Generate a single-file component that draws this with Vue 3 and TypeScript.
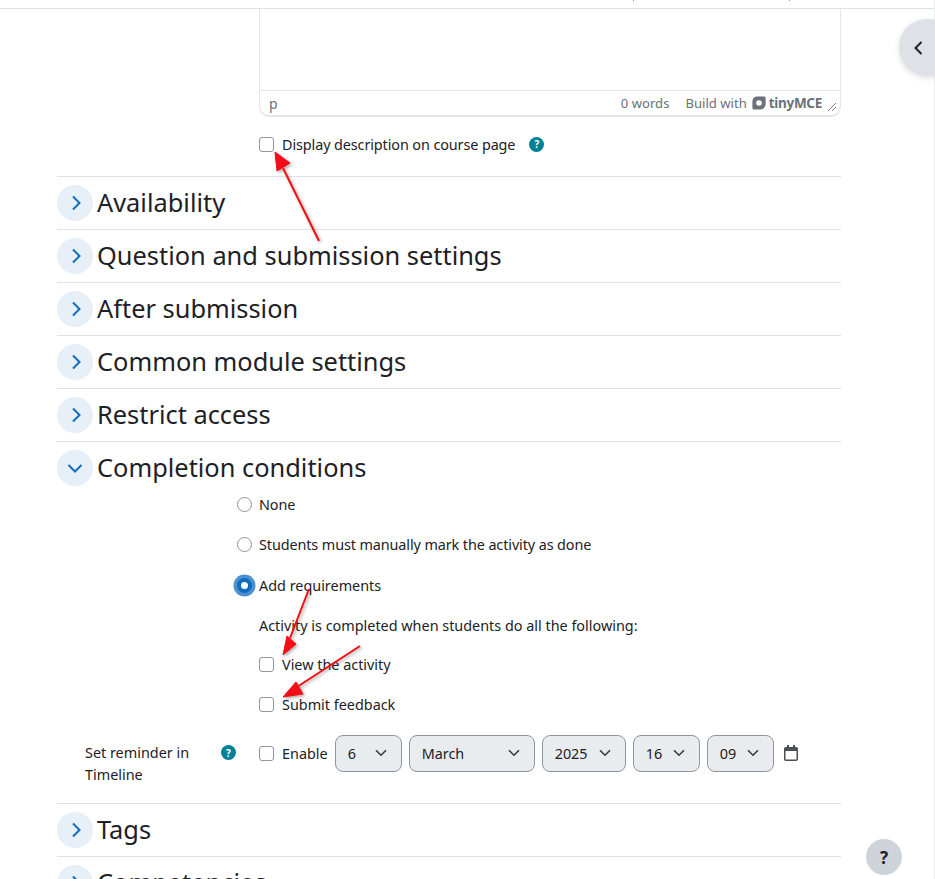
<script setup lang="ts">
const before: string[] = ['Availability', 'Question and submission settings', 'After submission', 'Common module settings', 'Restrict access']
const after: string[] = ['Tags', 'Competencies']
const selects: { value: string; cls: string }[] = [
  { value: '6', cls: 's-day' },
  { value: 'March', cls: 's-month' },
  { value: '2025', cls: 's-year' },
  { value: '16', cls: 's-hour' },
  { value: '09', cls: 's-min' },
]
</script>

<template>
  <div class="page">
    <div class="topbar">
      <span class="tick tick-a"></span>
      <span class="tick tick-b"></span>
    </div>
    <main class="content">
      <div class="desc-area">
        <div class="editor">
          <div class="editor-body"></div>
          <div class="editor-status">
            <span class="path">p</span>
            <span class="words">0 words</span>
            <span class="brand">Build with
              <svg class="brand-icon" viewBox="0 0 14 14" width="14" height="14">
                <path fill="#6a7178" fill-rule="evenodd" d="M4.200.4h8A1.400 1.400 0 0 1 13.600 1.800v6.400a5.400 5.400 0 0 1-5.400 5.400h-6.400A1.400 1.400 0 0 1 .4 12.200V5.800A5.400 5.400 0 0 1 4.200.4zM7 4.200A2.800 2.800 0 1 0 7 9.800 2.800 2.800 0 0 0 7 4.200z"/>
              </svg>
              <b class="tiny">tinyMCE</b>
            </span>
            <svg class="grip" viewBox="0 0 10 10" width="10" height="10">
              <path d="M9 1 1 9M9 5 5 9" stroke="#7b8288" stroke-width="1" fill="none"/>
            </svg>
          </div>
        </div>
        <div class="display-row">
          <span class="check"></span>
          <span class="label">Display description on course page</span>
          <span class="help">?</span>
        </div>
      </div>

      <section v-for="title in before" :key="title" class="sec">
        <span class="toggle">
          <svg class="right" viewBox="0 0 16 16" width="16" height="16"><path d="M5 1.500 11.500 8 5 14.500" class="chev"/></svg>
        </span>
        <h3>{{ title }}</h3>
      </section>

      <section class="sec sec-open">
        <span class="toggle">
          <svg viewBox="0 0 16 16" width="16" height="16"><path d="M1.500 5 8 11.500 14.500 5" class="chev"/></svg>
        </span>
        <h3>Completion conditions</h3>
      </section>

      <div class="completion">
        <div class="row radio-row"><span class="radio"></span><span class="tight">None</span></div>
        <div class="row radio-row"><span class="radio"></span><span class="tight">Students must manually mark the activity as done</span></div>
        <div class="row radio-row row-down"><span class="radio radio-on"></span><span>Add requirements</span></div>
        <div class="row indent">Activity is completed when students do all the following:</div>
        <div class="row indent check-row row-up"><span class="check"></span><span>View the activity</span></div>
        <div class="row indent check-row"><span class="check"></span><span>Submit feedback</span></div>
      </div>

      <div class="reminder">
        <div class="rem-label">
          <span>Set reminder in Timeline</span>
          <span class="help">?</span>
        </div>
        <div class="rem-fields">
          <span class="check"></span>
          <span class="enable">Enable</span>
          <div v-for="s in selects" :key="s.cls" class="select" :class="s.cls">
            <span>{{ s.value }}</span>
            <svg viewBox="0 0 12 8" width="12" height="8"><path d="M1 1.200 6 6.200l5-5" fill="none" stroke="#343a40" stroke-width="1.600"/></svg>
          </div>
          <svg class="cal" viewBox="0 0 14 16" width="14" height="16">
            <path fill="#495057" d="M3 0h2v2h4V0h2v2h1.200A1.800 1.800 0 0 1 14 3.800v10.400a1.800 1.800 0 0 1-1.800 1.800H1.800A1.800 1.800 0 0 1 0 14.200V3.800A1.800 1.800 0 0 1 1.800 2H3zM1.500 6v8a.5.5 0 0 0 .5.5h10a.5.5 0 0 0 .5-.5V6z"/>
          </svg>
        </div>
      </div>

      <section v-for="title in after" :key="title" class="sec">
        <span class="toggle">
          <svg class="right" viewBox="0 0 16 16" width="16" height="16"><path d="M5 1.500 11.500 8 5 14.500" class="chev"/></svg>
        </span>
        <h3>{{ title }}</h3>
      </section>
    </main>

    <span class="edge"></span>

    <svg class="arrows" width="935" height="879" viewBox="0 0 935 879">
      <defs>
        <filter id="sh" x="-30%" y="-30%" width="160%" height="160%">
          <feDropShadow dx="1.500" dy="1.500" stdDeviation="1.500" flood-color="#000" flood-opacity="0.35"/>
        </filter>
      </defs>
      <g filter="url(#sh)" fill="#f40c12" stroke="#f40c12">
        <path d="M319 241 283 168" stroke-width="2" fill="none"/>
        <path d="M275 152 277 171 290 163z" stroke-width="1"/>
        <path d="M309 589 290 638" stroke-width="2" fill="none"/>
        <path d="M283 655 287 636 296 644z" stroke-width="1"/>
        <path d="M360 646 297 687" stroke-width="2" fill="none"/>
        <path d="M283 697 296 682 303 694z" stroke-width="1"/>
      </g>
    </svg>

    <button class="drawer-toggle" aria-label="Close drawer">
      <svg viewBox="0 0 12 16" width="12" height="16"><path d="M9.500 2 3.500 8l6 6" fill="none" stroke="#1d2125" stroke-width="2"/></svg>
    </button>
    <button class="help-float">?</button>
  </div>
</template>

<style>
html, body { margin: 0; padding: 0; background: #fff; overflow: hidden; }
</style>

<style scoped>
.page {
  position: relative;
  width: 935px;
  height: 879px;
  overflow: hidden;
  background: #fff;
  color: #1d2125;
  font-family: "Noto Sans", "Open Sans", sans-serif;
  font-size: 14.4px;
}
.topbar {
  position: relative;
  height: 8px;
  border-bottom: 1px solid #dee2e6;
}
.tick { position: absolute; top: 0; width: 1px; height: 1px; background: #8f959e; }
.tick-a { left: 633px; }
.tick-b { left: 789px; }
.edge { position: absolute; right: 0; top: 0; bottom: 0; width: 1px; background: #eceef0; }
.content {
  width: 784px;
  margin-left: 57px;
}
.desc-area { padding-left: 202px; }
.editor {
  width: 582px;
  height: 108px;
  border: 1px solid #e3e6e9;
  border-top: 0;
  border-bottom-width: 2px;
  border-radius: 0 0 10px 10px;
  display: flex;
  flex-direction: column;
  box-sizing: border-box;
}
.editor-body { flex: 1; }
.editor-status {
  height: 25px;
  border-top: 1px solid #e3e6e9;
  display: flex;
  align-items: center;
  padding: 0 3px 0 9px;
  box-sizing: border-box;
  color: #6a7178;
  font-size: 13.100px;
}
.path { margin-right: auto; font-size: 14px; }
.words { margin-right: 16px; }
.brand { display: flex; align-items: center; gap: 3px; }
.brand-icon { margin-left: 2px; }
.tiny { font-weight: 700; font-size: 13.500px; letter-spacing: -0.3px; }
.grip { margin-left: 5px; margin-top: 8px; }
.display-row {
  display: flex;
  align-items: center;
  height: 22px;
  margin-top: 16px;
  margin-bottom: 21px;
}
.check {
  flex: none;
  width: 13px;
  height: 13px;
  border: 1px solid #8f959e;
  border-radius: 3px;
  background: #fff;
}
.label { margin-left: 8px; letter-spacing: -0.1px; }
.display-row .help { margin-left: 14px; }
.help {
  flex: none;
  display: inline-flex;
  align-items: center;
  justify-content: center;
  width: 15px;
  height: 15px;
  border-radius: 50%;
  background: #008196;
  color: #fff;
  font-size: 10px;
  font-weight: 700;
  margin-left: 15px;
}
.sec {
  height: 53px;
  box-sizing: border-box;
  border-top: 1px solid #dee2e6;
  display: flex;
  align-items: center;
  gap: 4px;
}
.sec h3 {
  margin: 0 0 1px;
  font-size: 25.400px;
  font-weight: 400;
  line-height: 1.2;
  color: #1d2125;
}
.toggle {
  flex: none;
  width: 36px;
  height: 36px;
  border-radius: 50%;
  background: #e7eff8;
  display: flex;
  align-items: center;
  justify-content: center;
}
.right { margin-left: 2px; }
.chev { fill: none; stroke: #0f6cbf; stroke-width: 2; }
.completion { padding-left: 178px; margin-top: -10px; }
.row {
  height: 40px;
  display: flex;
  align-items: center;
  white-space: nowrap;
}
.row-down { margin-top: 1px; }
.row-up { margin-top: -1px; }
.tight { letter-spacing: -0.1px; }
.radio-row { gap: 7px; }
.radio {
  flex: none;
  width: 13px;
  height: 13px;
  margin-left: 2px;
  border: 1px solid #8f959e;
  border-radius: 50%;
  background: #fff;
}
.radio-on {
  box-sizing: border-box;
  width: 15px;
  height: 15px;
  border: 4px solid #0f6cbf;
  box-shadow: 0 0 0 3.500px rgba(15, 108, 191, 0.75);
}
.indent { padding-left: 24px; }
.check-row { gap: 8px; }
.reminder {
  display: flex;
  height: 79px;
  padding-top: 8px;
  box-sizing: border-box;
}
.rem-label {
  box-sizing: border-box;
  width: 202px;
  padding-left: 28px;
  position: relative;
  line-height: 22px;
  padding-top: 10px;
  padding-right: 60px;
}
.rem-label .help { position: absolute; left: 164px; top: 13px; margin: 0; }
.rem-fields {
  display: flex;
  align-items: center;
  height: 36px;
  margin-top: 3px;
}
.enable { margin-left: 8px; margin-right: 7px; }
.select {
  box-sizing: border-box;
  height: 37px;
  border: 1px solid #8f959e;
  border-radius: 8px;
  background: #e9ecef;
  display: flex;
  align-items: center;
  justify-content: space-between;
  padding: 0 14px 0 12px;
  margin-right: 7px;
}
.s-day { width: 67px; }
.s-month { width: 126px; }
.s-year { width: 84px; }
.s-hour { width: 67px; }
.s-min { width: 67px; }
.cal { margin-left: 3px; }
.arrows { position: absolute; left: 0; top: 0; pointer-events: none; }
.drawer-toggle {
  position: absolute;
  left: 899px;
  top: 19px;
  width: 56px;
  height: 57px;
  border: 0;
  padding: 0 0 0 13px;
  border-radius: 50%;
  background: #dee2e6;
  box-shadow: 0 2px 6px rgba(0,0,0,0.12);
  display: flex;
  align-items: center;
  justify-content: flex-start;
}
.help-float {
  position: absolute;
  left: 866px;
  top: 839px;
  width: 36px;
  height: 36px;
  border: 0;
  padding: 0;
  border-radius: 50%;
  background: #ced4da;
  color: #1d2125;
  font-family: "Noto Sans", sans-serif;
  font-size: 17px;
  font-weight: 700;
}
</style>
